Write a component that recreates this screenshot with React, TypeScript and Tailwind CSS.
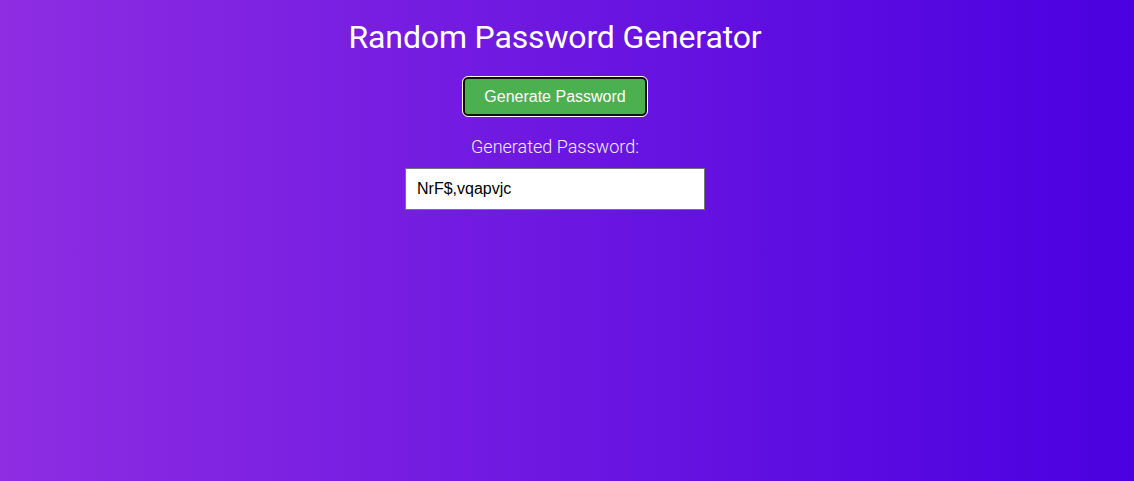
export default function App() {
  return (
    <div
      className="w-full h-[481px] bg-[linear-gradient(to_right,#8e2de2,#4a00e0)] overflow-hidden"
      style={{ fontFamily: "Roboto, sans-serif" }}
    >
      <div className="w-[1110px] flex flex-col items-center">
        <h1 className="mt-[18px] text-[32px] leading-[38px] text-white font-normal tracking-[-0.15px] font-['Roboto',sans-serif]">
          Random Password Generator
        </h1>
        <button className="mt-[21px] w-[184px] h-[39px] bg-[#4caf50] border-2 border-[#101010] rounded-[5px] outline outline-1 outline-white text-white text-[16px] font-['Liberation_Sans',Arial,sans-serif]">
          Generate Password
        </button>
        <div className="mt-[20px] text-[18px] leading-[21px] font-light text-[#f3ecfc] font-['Roboto',sans-serif]">
          Generated Password:
        </div>
        <input
          readOnly
          value="NrF$,vqapvjc"
          className="mt-[11px] w-[300px] h-[42px] bg-white border border-[#767676] px-[11px] text-[16px] text-black font-['Liberation_Sans',Arial,sans-serif] outline-none"
        />
      </div>
    </div>
  );
}
